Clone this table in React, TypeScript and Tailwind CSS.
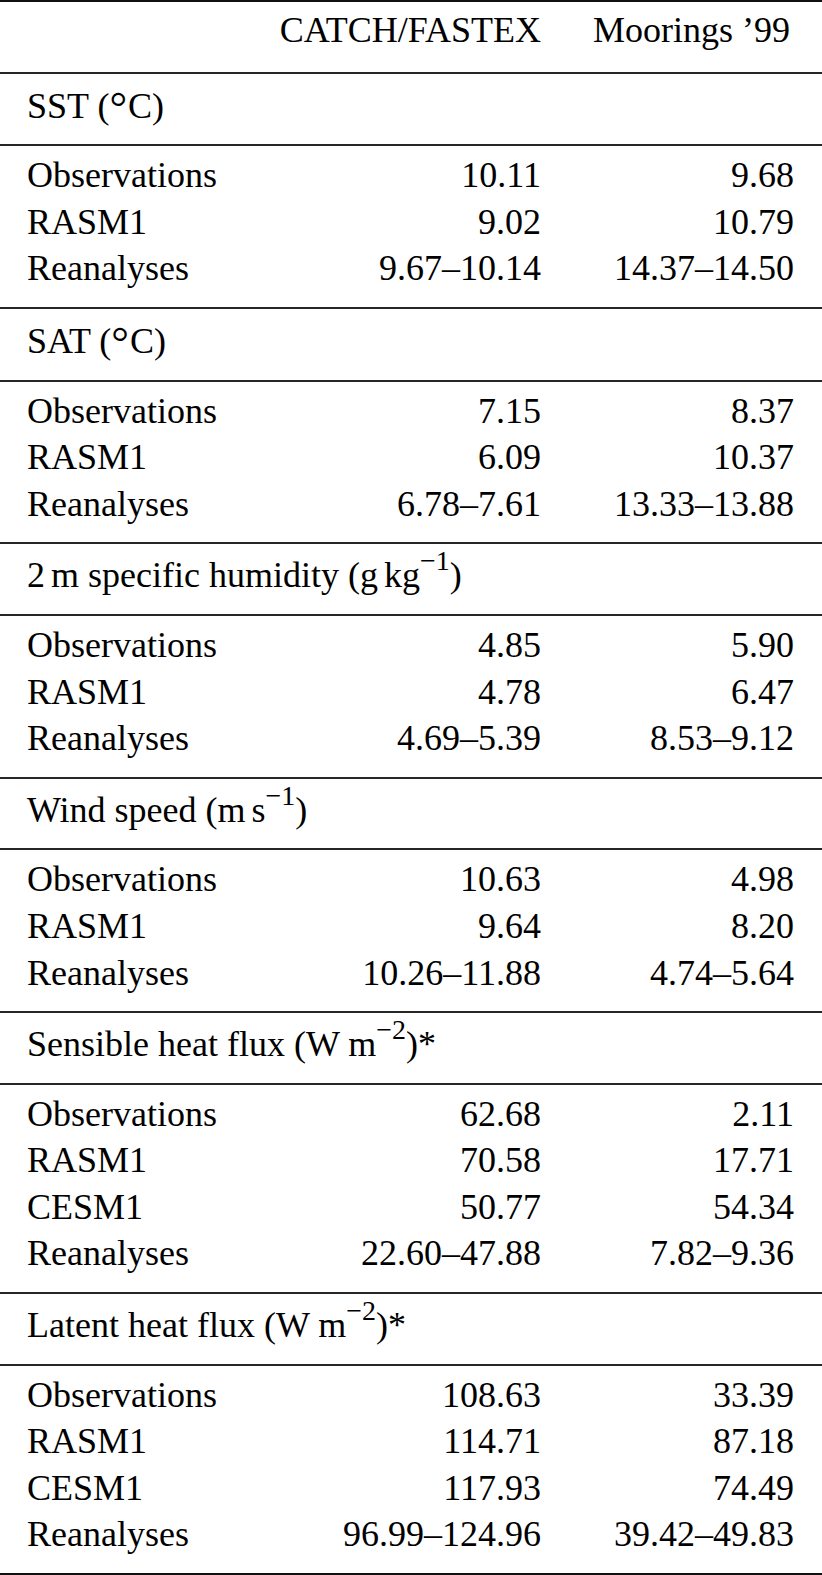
import React from 'react';

type Row = [string, string, string];

interface Section {
  title: React.ReactNode;
  rows: Row[];
}

const Sup = ({ children }: { children: React.ReactNode }) => (
  <span className="relative -top-[17px] text-[28px] leading-none">{children}</span>
);

const Thin = () => <span className="inline-block w-[6px]" />;

const Deg = () => (
  <span className="relative top-[4px] mr-[1px] text-[44px] leading-none">°</span>
);

const sections: Section[] = [
  {
    title: <>SST (<Deg />C)</>,
    rows: [
      ['Observations', '10.11', '9.68'],
      ['RASM1', '9.02', '10.79'],
      ['Reanalyses', '9.67–10.14', '14.37–14.50'],
    ],
  },
  {
    title: <>SAT (<Deg />C)</>,
    rows: [
      ['Observations', '7.15', '8.37'],
      ['RASM1', '6.09', '10.37'],
      ['Reanalyses', '6.78–7.61', '13.33–13.88'],
    ],
  },
  {
    title: (
      <>
        2<Thin />m specific humidity (g<Thin />kg<Sup>−1</Sup>)
      </>
    ),
    rows: [
      ['Observations', '4.85', '5.90'],
      ['RASM1', '4.78', '6.47'],
      ['Reanalyses', '4.69–5.39', '8.53–9.12'],
    ],
  },
  {
    title: (
      <>
        Wind speed (m<Thin />s<Sup>−1</Sup>)
      </>
    ),
    rows: [
      ['Observations', '10.63', '4.98'],
      ['RASM1', '9.64', '8.20'],
      ['Reanalyses', '10.26–11.88', '4.74–5.64'],
    ],
  },
  {
    title: (
      <>
        Sensible heat flux (W m<Sup>−2</Sup>)*
      </>
    ),
    rows: [
      ['Observations', '62.68', '2.11'],
      ['RASM1', '70.58', '17.71'],
      ['CESM1', '50.77', '54.34'],
      ['Reanalyses', '22.60–47.88', '7.82–9.36'],
    ],
  },
  {
    title: (
      <>
        Latent heat flux (W m<Sup>−2</Sup>)*
      </>
    ),
    rows: [
      ['Observations', '108.63', '33.39'],
      ['RASM1', '114.71', '87.18'],
      ['CESM1', '117.93', '74.49'],
      ['Reanalyses', '96.99–124.96', '39.42–49.83'],
    ],
  },
];

const Rule = () => <div className="h-[2px] bg-[#262626]" />;

function DataRow({ row }: { row: Row }) {
  return (
    <div className="flex pl-[27px] pr-[28px]">
      <div className="flex-1">{row[0]}</div>
      <div className="w-[300px] text-right">{row[1]}</div>
      <div className="w-[253px] text-right">{row[2]}</div>
    </div>
  );
}

export default function App() {
  return (
    <div
      className="w-[822px] min-h-[1575px] bg-white text-black text-[36px] leading-[46.6px] overflow-hidden"
      style={{ fontFamily: '"Liberation Serif", "Times New Roman", serif' }}
    >
      <div className="h-[2px] bg-[#111]" />
      <div className="flex pl-[27px] pr-[32px] pt-[5px] pb-[18px]">
        <div className="flex-1" />
        <div className="w-[302px] text-right">CATCH/FASTEX</div>
        <div className="w-[249px] text-right">Moorings ’99</div>
      </div>

      {sections.map((section, i) => (
        <div key={i}>
          <Rule />
          <div className="pl-[27px] pt-[8px] pb-[15px]">{section.title}</div>
          <Rule />
          <div className="pt-[6px] pb-[15px]">
            {section.rows.map((row, j) => (
              <DataRow key={j} row={row} />
            ))}
          </div>
        </div>
      ))}
      <div className="h-[3px] bg-[#111]" />
    </div>
  );
}
